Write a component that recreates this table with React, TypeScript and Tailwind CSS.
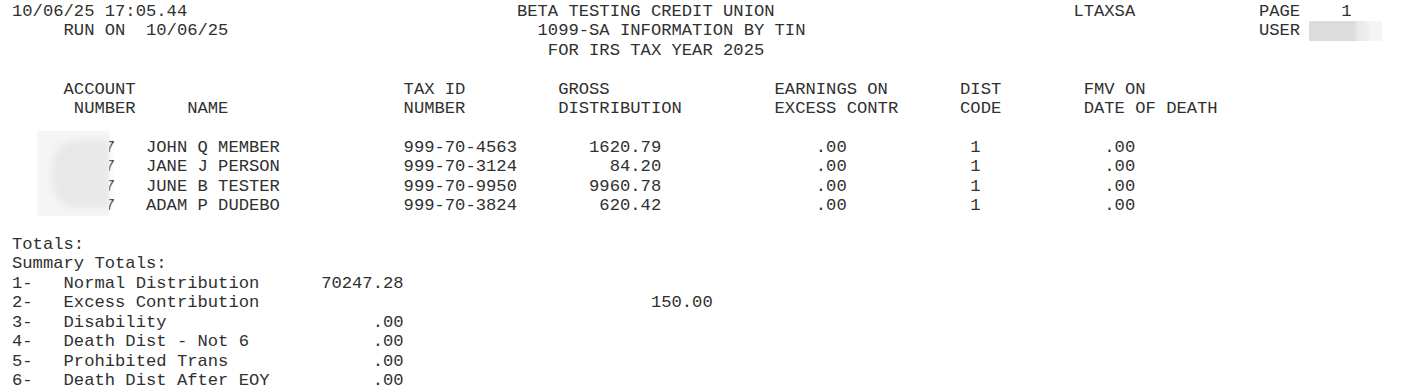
type Seg = [number, string, 'l' | 'r'?];

// build a fixed-column line; 'r' means the column given is the last cell
function build(segs: Seg[]) {
  let s = '';
  for (const [col, text, align] of segs) {
    const start = align === 'r' ? col - text.length + 1 : col;
    if (s.length < start) s += ' '.repeat(start - s.length);
    s += text;
  }
  return s;
}

const members = [
  { name: 'JOHN Q MEMBER', tin: '999-70-4563', gross: '1620.79' },
  { name: 'JANE J PERSON', tin: '999-70-3124', gross: '84.20' },
  { name: 'JUNE B TESTER', tin: '999-70-9950', gross: '9960.78' },
  { name: 'ADAM P DUDEBO', tin: '999-70-3824', gross: '620.42' },
];

const summary: [string, string, number][] = [
  ['Normal Distribution', '70247.28', 37],
  ['Excess Contribution', '150.00', 67],
  ['Disability', '.00', 37],
  ['Death Dist - Not 6', '.00', 37],
  ['Prohibited Trans', '.00', 37],
  ['Death Dist After EOY', '.00', 37],
];

function Line({ children }: { children?: React.ReactNode }) {
  return <div className="h-[19.43px] whitespace-pre">{children}</div>;
}

export default function App() {
  return (
    <div
      className="relative w-[1412px] h-[391px] overflow-hidden bg-white pl-[12px] pt-[2px] text-[#303030] text-[17.18px] leading-[19.43px]"
      style={{ fontFamily: '"Liberation Mono", "Courier New", monospace' }}
    >
      <Line>
        {build([
          [0, '10/06/25 17:05.44'],
          [49, 'BETA TESTING CREDIT UNION'],
          [103, 'LTAXSA'],
          [121, 'PAGE'],
          [129, '1'],
        ])}
      </Line>
      <div className="flex h-[19.43px] items-center">
        <span className="whitespace-pre">
          {build([
            [5, 'RUN ON'],
            [13, '10/06/25'],
            [51, '1099-SA INFORMATION BY TIN'],
            [121, 'USER'],
          ])}
        </span>
        <span className="ml-[9px] mt-[-0.5px] h-[20px] w-[73px] bg-[linear-gradient(90deg,#dcdcdc_0%,#dcdcdc_62%,#e8e8e8_66%,#eeeeee_78%,#f5f5f5_86%,#f5f5f5_100%)]" />
      </div>
      <Line>{build([[52, 'FOR IRS TAX YEAR 2025']])}</Line>
      <Line />
      <Line>
        {build([
          [5, 'ACCOUNT'],
          [38, 'TAX ID'],
          [53, 'GROSS'],
          [74, 'EARNINGS ON'],
          [92, 'DIST'],
          [104, 'FMV ON'],
        ])}
      </Line>
      <Line>
        {build([
          [6, 'NUMBER'],
          [17, 'NAME'],
          [38, 'NUMBER'],
          [53, 'DISTRIBUTION'],
          [74, 'EXCESS CONTR'],
          [92, 'CODE'],
          [104, 'DATE OF DEATH'],
        ])}
      </Line>
      <Line />
      <div className="relative">
        {members.map(m => (
          <Line key={m.tin}>
            {build([
              [9, '7'],
              [13, m.name],
              [38, m.tin],
              [62, m.gross, 'r'],
              [80, '.00', 'r'],
              [93, '1'],
              [108, '.00', 'r'],
            ])}
          </Line>
        ))}
        {/* redacted account numbers */}
        <div className="absolute left-[25px] top-[-7px] h-[85px] w-[72px] bg-[#f5f5f5]">
          <div className="ml-[15px] mt-[9px] h-[68px] w-[57px] rounded-l-[26px] bg-[#e8e8e8] blur-[3px]" />
        </div>
      </div>
      <Line />
      <Line>Totals:</Line>
      <Line>Summary Totals:</Line>
      {summary.map(([label, amt, end], i) => (
        <Line key={label}>
          {build([
            [0, `${i + 1}-`],
            [5, label],
            [end, amt, 'r'],
          ])}
        </Line>
      ))}
    </div>
  );
}
